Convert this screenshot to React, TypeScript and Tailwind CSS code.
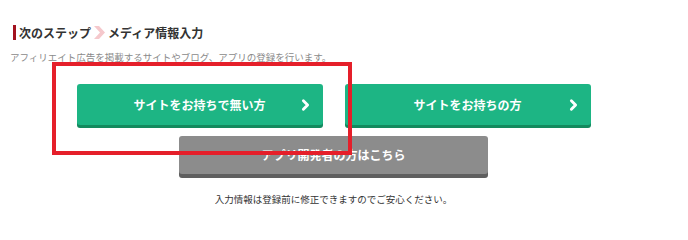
import { ChevronRight } from "lucide-react";

const font = { fontFamily: '"Noto Sans CJK JP", "Noto Sans", sans-serif' };

function GreenButton({ label }: { label: string }) {
  return (
    <button className="relative flex h-[41px] w-[246px] items-center justify-center rounded-[3px] bg-[#1db584] text-[12px] font-bold text-white shadow-[0_3px_0_#138a5e]">
      {label}
      <ChevronRight
        size={17}
        strokeWidth={4}
        className="absolute right-[9px] top-1/2 -translate-y-1/2"
      />
    </button>
  );
}

export default function App() {
  return (
    <div className="relative h-[218px] w-[688px] bg-white" style={font}>
      {/* Header */}
      <div className="pl-[13px] pt-[25px]">
        <div className="flex h-[15px] items-center">
          <span className="h-[15px] w-[3px] bg-[#a3121f]" />
          <h2 className="ml-[3px] text-[12px] font-bold leading-[15px] text-[#333]">
            次のステップ
          </h2>
          <svg width="11" height="13" viewBox="0 0 11 13" className="ml-[3px]">
            <path d="M0 0 H5 L11 6.5 L5 13 H0 L6 6.5 Z" fill="#f5c8cc" />
          </svg>
          <span className="ml-[3px] text-[12px] font-bold leading-[15px] text-[#333]">
            メディア情報入力
          </span>
        </div>
        <p className="-ml-[3px] mt-[11px] text-[9.5px] leading-[12px] text-[#8a8a8a]">
          アフィリエイト広告を掲載するサイトやブログ、アプリの登録を行います。
        </p>
      </div>

      {/* Buttons */}
      <div className="flex w-[667px] flex-col items-center">
        <div className="mt-[21px] flex gap-[22px]">
          <GreenButton label="サイトをお持ちで無い方" />
          <GreenButton label="サイトをお持ちの方" />
        </div>
        <button className="mt-[11px] flex h-[38px] w-[309px] items-center justify-center rounded-[3px] bg-[#8c8c8c] text-[12px] font-bold text-white shadow-[0_4px_0_#5f5f5f]">
          アプリ開発者の方はこちら
        </button>
        <p className="mt-[19px] text-[9.5px] leading-[12px] text-[#333]">
          入力情報は登録前に修正できますのでご安心ください。
        </p>
      </div>

      {/* Annotation frame */}
      <div className="pointer-events-none absolute left-[52px] top-[62px] h-[93px] w-[300px] border-4 border-[#e51f2a]" />
    </div>
  );
}
